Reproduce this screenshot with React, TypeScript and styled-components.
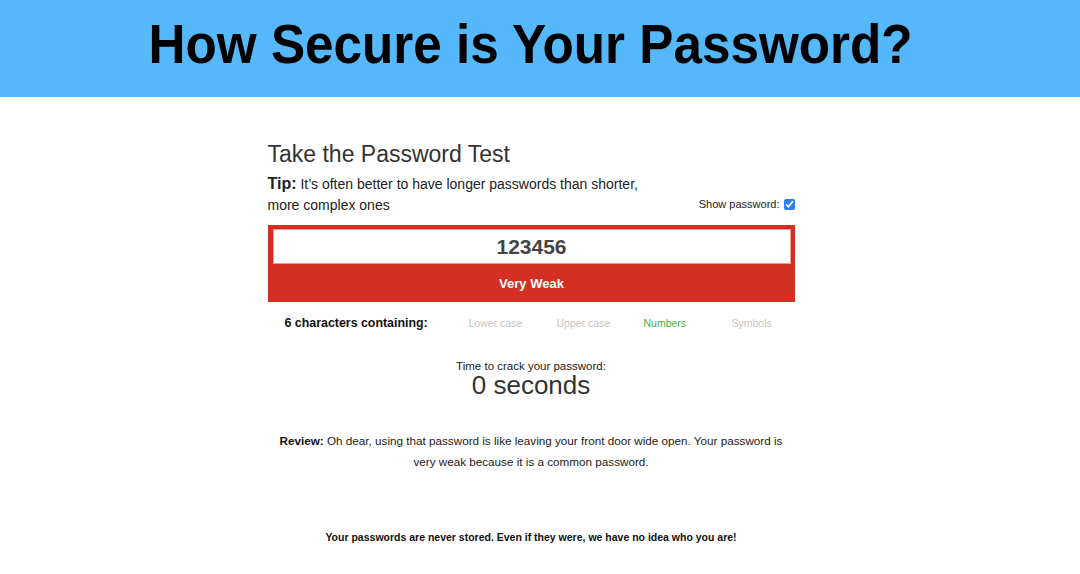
import { FC } from "react";
import styled, { createGlobalStyle } from "styled-components";

const GlobalStyle = createGlobalStyle`
  body {
    margin: 0;
    background: #fff;
    font-family: "Liberation Sans", Arial, sans-serif;
    color: #222;
  }
`;

const CHECKS = [
  { label: "Lower case", on: false },
  { label: "Upper case", on: false },
  { label: "Numbers", on: true },
  { label: "Symbols", on: false },
];

const App: FC = () => {
  return (
    <>
      <GlobalStyle />
      <SBanner>
        <h1>How Secure is Your Password?</h1>
      </SBanner>

      <SMain>
        <STitle>Take the Password Test</STitle>

        <STipRow>
          <p>
            <strong>Tip:</strong> It’s often better to have longer passwords
            than shorter, more complex ones
          </p>
          <label>
            Show password: <SCheck type="checkbox" defaultChecked />
          </label>
        </STipRow>

        <SMeter>
          <SInput type="text" defaultValue="123456" />
          <SStrength>Very Weak</SStrength>
        </SMeter>

        <SChars>
          <strong>6 characters containing:</strong>
          {CHECKS.map((c) => (
            <SCharType key={c.label} $on={c.on}>
              {c.label}
            </SCharType>
          ))}
        </SChars>

        <SCrack>
          <span>Time to crack your password:</span>
          <em>0 seconds</em>
        </SCrack>

        <SReview>
          <strong>Review:</strong> Oh dear, using that password is like leaving
          your front door wide open. Your password is very weak because it is a
          common password.
        </SReview>

        <SFooter>
          Your passwords are never stored. Even if they were, we have no idea
          who you are!
        </SFooter>
      </SMain>
    </>
  );
};

const SBanner = styled.header`
  height: 97px;
  background: #55b8fb;
  display: flex;
  align-items: center;
  justify-content: center;
  & > h1 {
    margin: 0 18px 10px 0;
    font-family: "Liberation Sans", Arial, sans-serif;
    font-weight: 900;
    font-size: 56px;
    color: #000;
    transform: scaleX(0.915);
  }
`;

const SMain = styled.main`
  width: 527px;
  margin: 0 auto;
  padding: 43px 18px 0 0;
`;

const STitle = styled.h2`
  margin: 0;
  font-weight: 400;
  font-size: 23px;
  line-height: 28px;
  color: #333;
`;

const STipRow = styled.div`
  display: flex;
  justify-content: space-between;
  align-items: flex-end;
  margin-top: 6px;
  & > p {
    margin: 0;
    width: 380px;
    font-size: 14px;
    line-height: 21px;
    color: #222;
    & > strong {
      font-size: 16px;
      line-height: 16px;
    }
  }
  & > label {
    display: flex;
    align-items: center;
    gap: 4px;
    font-size: 11px;
    color: #222;
    margin-bottom: 6px;
  }
`;

const SCheck = styled.input`
  width: 11px;
  height: 11px;
  margin: 0;
  accent-color: #2f7cf6;
`;

const SMeter = styled.div`
  margin-top: 9px;
  background: #d32f23;
  padding: 4px 4px 0 5px;
  display: flex;
  flex-direction: column;
`;

const SInput = styled.input`
  height: 35px;
  box-sizing: border-box;
  border: 1px solid #ef9a93;
  outline: none;
  text-align: center;
  font-family: "Liberation Sans", Arial, sans-serif;
  font-weight: 700;
  font-size: 21px;
  color: #444;
`;

const SStrength = styled.div`
  height: 38px;
  display: flex;
  align-items: center;
  justify-content: center;
  color: #fff;
  font-weight: 700;
  font-size: 13px;
`;

const SChars = styled.div`
  display: grid;
  grid-template-columns: 184px 88px 87px 88px 1fr;
  align-items: center;
  padding: 14px 0 0 17px;
  & > strong {
    font-size: 12.4px;
    color: #111;
  }
`;

const SCharType = styled.span<{ $on: boolean }>`
  font-size: 10.5px;
  color: ${(p) => (p.$on ? "#4caf3c" : "#c4c4c4")};
`;

const SCrack = styled.div`
  margin-top: 30px;
  display: flex;
  flex-direction: column;
  align-items: center;
  & > span {
    font-size: 11.5px;
    color: #222;
  }
  & > em {
    font-style: normal;
    font-size: 26px;
    line-height: 26px;
    color: #333;
  }
`;

const SReview = styled.p`
  margin: 32px 0 0 0;
  text-align: center;
  font-size: 11.7px;
  line-height: 21px;
  color: #222;
  & > strong {
    color: #111;
  }
`;

const SFooter = styled.p`
  margin: 59px 0 0 0;
  text-align: center;
  font-size: 10.5px;
  font-weight: 700;
  color: #111;
`;

export default App;
